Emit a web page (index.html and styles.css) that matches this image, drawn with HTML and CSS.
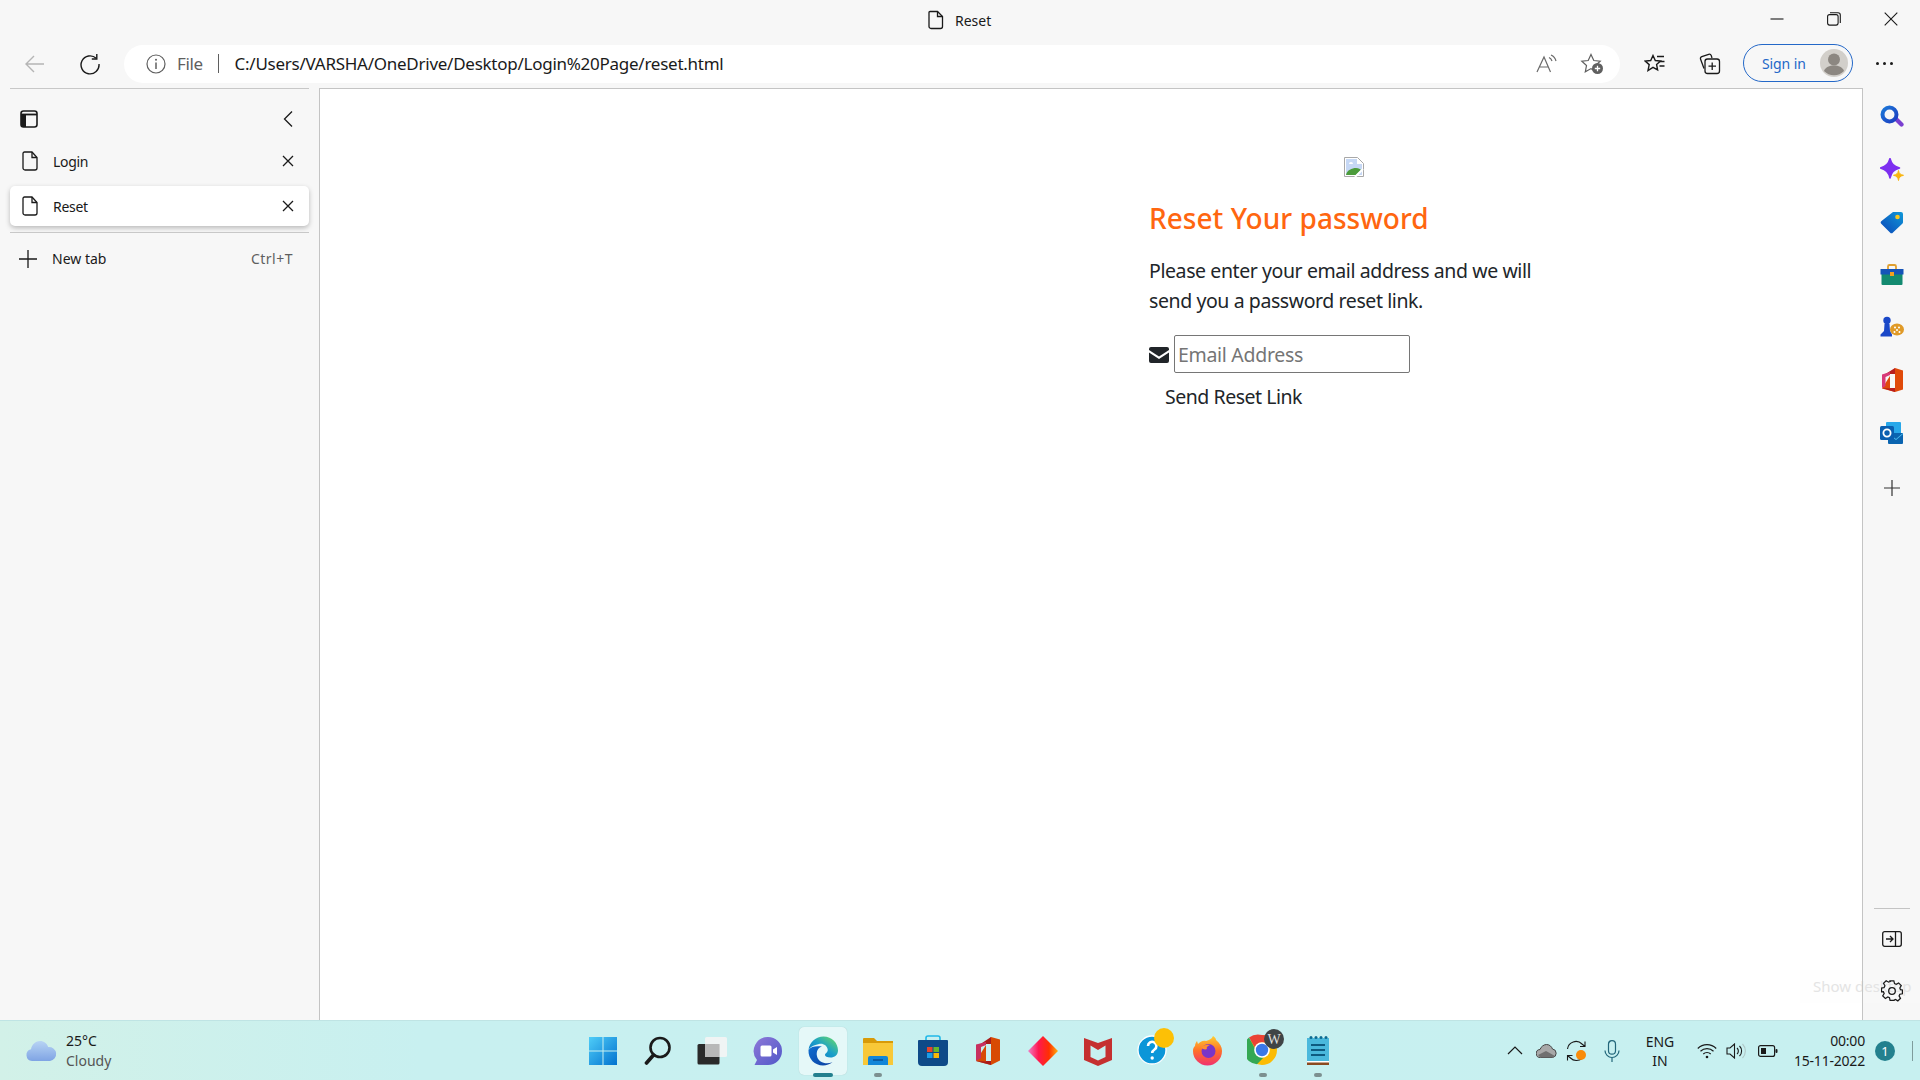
FILE: index.html
```html
<!DOCTYPE html>
<html>
<head>
    <title>Reset</title>
    <link rel="stylesheet" href="styles.css">
</head>
<body>
    <!-- title bar -->
    <div class="titlebar">
        <div class="title">
            <svg width="18" height="20" viewBox="0 0 18 20" fill="none" stroke="#1a1a1a" stroke-width="1.3"><path d="M3 1.5h7.5L15.5 6.500V16.500a2 2 0 0 1-2 2H4a2 2 0 0 1-2-2V2.500a1 1 0 0 1 1-1z"/><path d="M10.500 1.500V6.500h5"/></svg>
            <span>Reset</span>
        </div>
        <div class="winbtns">
            <svg width="14" height="14" viewBox="0 0 14 14" stroke="#1a1a1a" stroke-width="1.100"><path d="M0.500 7h13"/></svg>
            <svg width="14" height="14" viewBox="0 0 14 14" fill="none" stroke="#1a1a1a" stroke-width="1.100"><rect x="0.600" y="2.600" width="10.500" height="10.500" rx="2"/><path d="M3 0.700h8a2.300 2.300 0 0 1 2.300 2.300v8"/></svg>
            <svg width="14" height="14" viewBox="0 0 14 14" stroke="#1a1a1a" stroke-width="1.100"><path d="M0.700 0.700l12.600 12.600M13.300 0.700L0.700 13.300"/></svg>
        </div>
    </div>

    <!-- toolbar -->
    <div class="toolbar">
        <svg class="back" width="22" height="20" viewBox="0 0 22 20" fill="none" stroke="#b5b5b5" stroke-width="1.400"><path d="M20 10H2M10 2l-8 8 8 8"/></svg>
        <svg class="reload" width="22" height="22" viewBox="0 0 22 22" fill="none" stroke="#1a1a1a" stroke-width="1.400"><path d="M17.200 5.300A9 9 0 1 0 20 11"/><path d="M17.800 1v5h-5"/></svg>
        <div class="addressbar">
            <svg width="20" height="20" viewBox="0 0 20 20" fill="none" stroke="#5f5f5f" stroke-width="1.200"><circle cx="10" cy="10" r="9"/><path d="M10 8.500v6.500" stroke-width="1.500"/><circle cx="10" cy="5.800" r="1" fill="#5f5f5f" stroke="none"/></svg>
            <span class="scheme">File</span>
            <span class="sep"></span>
            <span class="url">C:/Users/VARSHA/OneDrive/Desktop/Login%20Page/reset.html</span>
            <svg class="readaloud" width="22" height="20" viewBox="0 0 22 20" fill="none" stroke="#6a6a6a" stroke-width="1.200"><path d="M1 18L8 3l6.500 15M3.500 13h9"/><path d="M13 3.500a6 6 0 0 1 3 3.500M15 1a9 9 0 0 1 5 6"/></svg>
            <svg class="addfav" width="24" height="22" viewBox="0 0 24 22"><path d="M11 1.500l2.800 6 6.400 0.700-4.700 4.300 1.300 6.300-5.800-3.200-5.700 3.200 1.200-6.300L1.800 8.200l6.400-0.700z" fill="none" stroke="#5f5f5f" stroke-width="1.200"/><circle cx="17.500" cy="15.500" r="5.500" fill="#5f5f5f"/><path d="M14.800 15.500h5.400M17.500 12.800v5.400" stroke="#fff" stroke-width="1.300"/></svg>
        </div>
        <svg class="favs" width="22" height="20" viewBox="0 0 22 20" fill="none" stroke="#1a1a1a" stroke-width="1.400"><path d="M9 1.500l2.300 5 5.200 0.600-3.900 3.500 1 5.300L9 13.300l-5 3.200 1.200-5.900L1.200 7.100l5.500-0.600z"/><path d="M13 2.500h7M15.500 7.500h5M15.500 12h5"/></svg>
        <svg class="colls" width="22" height="22" viewBox="0 0 22 22" fill="none" stroke="#1a1a1a" stroke-width="1.300"><path d="M5 15.500L1.600 6.200a2 2 0 0 1 1.200-2.600L9.700 1.300a2 2 0 0 1 2.500 1.100L13 5"/><rect x="6" y="6" width="14.500" height="14.500" rx="2.500"/><path d="M13.200 9.500v7.500M9.500 13.200h7.500"/></svg>
        <div class="signin">
            <span>Sign in</span>
            <svg width="28" height="28" viewBox="0 0 28 28"><circle cx="14" cy="14" r="14" fill="#d2cfca"/><circle cx="14" cy="10.500" r="6" fill="#8c8781"/><path d="M4 22c1.500-4 5.500-5.500 10-5.500S22.500 18 24 22a14 14 0 0 1-20 0z" fill="#8c8781"/></svg>
        </div>
        <div class="more"><i></i><i></i><i></i></div>
    </div>

    <div class="main">
        <!-- vertical tabs -->
        <div class="sidebar">
            <div class="side-head">
                <svg width="18" height="18" viewBox="0 0 18 18"><rect x="1" y="1" width="16" height="16" rx="2.500" fill="none" stroke="#1a1a1a" stroke-width="1.600"/><path d="M1 4.500h16" stroke="#1a1a1a" stroke-width="1.800"/><path d="M1 4h5v13H3a2 2 0 0 1-2-2z" fill="#1a1a1a"/></svg>
                <svg width="10" height="18" viewBox="0 0 10 18" fill="none" stroke="#1a1a1a" stroke-width="1.300"><path d="M9 1.500L1.500 9 9 16.500"/></svg>
            </div>
            <div class="tab">
                <svg width="16" height="20" viewBox="0 0 16 20" fill="none" stroke="#1a1a1a" stroke-width="1.300"><path d="M2.500 1h7.500l5 5.500V17a2 2 0 0 1-2 2H3a2 2 0 0 1-2-2V2.500A1.500 1.500 0 0 1 2.500 1z"/><path d="M10 1v5.500h5"/></svg>
                <span class="tab-name">Login</span>
                <svg width="12" height="12" viewBox="0 0 12 12" stroke="#1a1a1a" stroke-width="1.300"><path d="M1 1l10 10M11 1L1 11"/></svg>
            </div>
            <div class="tab tab-active">
                <svg width="16" height="20" viewBox="0 0 16 20" fill="none" stroke="#1a1a1a" stroke-width="1.300"><path d="M2.500 1h7.500l5 5.500V17a2 2 0 0 1-2 2H3a2 2 0 0 1-2-2V2.500A1.500 1.500 0 0 1 2.500 1z"/><path d="M10 1v5.500h5"/></svg>
                <span class="tab-name">Reset</span>
                <svg width="12" height="12" viewBox="0 0 12 12" stroke="#1a1a1a" stroke-width="1.300"><path d="M1 1l10 10M11 1L1 11"/></svg>
            </div>
            <div class="newtab">
                <svg width="18" height="18" viewBox="0 0 18 18" stroke="#1a1a1a" stroke-width="1.300"><path d="M9 0v18M0 9h18"/></svg>
                <span class="tab-name">New tab</span>
                <span class="shortcut">Ctrl+T</span>
            </div>
        </div>

        <!-- page -->
        <div class="page">
            <div class="reset-box">
                <svg class="broken" width="20" height="20" viewBox="0 0 20 20"><path d="M0.500 0.500h13l6 6v13h-19z" fill="#fff" stroke="#a8a8a8"/><path d="M2 2h11v5h5v11H2z" fill="#c6d8f5"/><path d="M2 18c1-5 6-7 10-7 3 0 4 1 5 2l-5 5z" fill="#4c9c3c"/><path d="M5 7a2 2 0 0 1 4 0z" fill="#fff"/><path d="M11 20l8-8" stroke="#fff" stroke-width="2"/></svg>
                <h3>Reset Your password</h3>
                <p>Please enter your email address and we will send you a password reset link.</p>
                <form class="reset-form" onsubmit="return false;">
                    <div class="field">
                        <svg width="20" height="16" viewBox="0 0 20 16"><path d="M2 0h16a2 2 0 0 1 2 2v1l-10 6.500L0 3V2a2 2 0 0 1 2-2z" fill="#212529"/><path d="M0 5.500l10 6.500 10-6.500V14a2 2 0 0 1-2 2H2a2 2 0 0 1-2-2z" fill="#212529"/></svg>
                        <input type="email" placeholder="Email Address">
                    </div>
                    <button type="submit">Send Reset Link</button>
                </form>
            </div>
        </div>

        <!-- edge sidebar -->
        <div class="rail">
            <svg width="24" height="24" viewBox="0 0 24 24"><defs><linearGradient id="lens" x1="0" y1="0" x2="1" y2="1"><stop offset="0" stop-color="#1c78d8"/><stop offset="1" stop-color="#1c3cc0"/></linearGradient></defs><path d="M14 15l3-3 6 6a2 2 0 0 1-3 3z" fill="#7a3fd0"/><circle cx="9.500" cy="9.500" r="7" fill="none" stroke="url(#lens)" stroke-width="4"/></svg>
            <svg width="24" height="24" viewBox="0 0 24 24"><path d="M10 0.500c1.500 5.500 3.500 7.500 9.500 9.500-6 2-8 4-9.500 10C8.500 14 6 12 0.500 10 6 8 8.500 6 10 0.500z" fill="#7d2ff0" stroke="#7d2ff0" stroke-width="1.500" stroke-linejoin="round"/><path d="M18.500 12.500c0.500 3 1.500 4 5 4.800-3.500 0.800-4.500 2-5 5.200-0.600-3.200-1.600-4.400-5-5.200 3.400-0.800 4.400-1.800 5-4.800z" fill="#f9b50f" stroke="#f9b50f"/></svg>
            <svg width="24" height="24" viewBox="0 0 24 24"><defs><linearGradient id="tag" x1="0" y1="1" x2="1" y2="0"><stop offset="0" stop-color="#0a46b8"/><stop offset="1" stop-color="#1098d8"/></linearGradient></defs><path d="M13 2h8a2 2 0 0 1 2 2v8a2 2 0 0 1-1 2l-9 8.500a2 2 0 0 1-3 0L1.500 14a2 2 0 0 1 0-3z" fill="url(#tag)"/><circle cx="17.500" cy="7" r="2.300" fill="#f8c820"/></svg>
            <svg width="24" height="24" viewBox="0 0 24 24"><path d="M8 6V3.500A1.500 1.500 0 0 1 9.500 2h5A1.500 1.500 0 0 1 16 3.500V6" fill="none" stroke="#e0a030" stroke-width="1.800"/><rect x="1.500" y="10" width="21" height="12" rx="1" fill="#138a70"/><path d="M0.500 6h23v5.500H0.500z" fill="#1554b8"/><rect x="10" y="9" width="4" height="4" fill="#f0a020"/></svg>
            <svg width="24" height="24" viewBox="0 0 24 24"><ellipse cx="17" cy="14.500" rx="7" ry="6" fill="#e09a28"/><circle cx="15" cy="12.500" r="1" fill="#fff"/><circle cx="19" cy="12.500" r="1" fill="#fff"/><circle cx="17" cy="15" r="1" fill="#fff"/><circle cx="14.500" cy="17" r="1" fill="#fff"/><circle cx="19.500" cy="17" r="1" fill="#fff"/><circle cx="7" cy="5.500" r="3.700" fill="#1a48c8"/><path d="M4.500 9h5L10 16l2 3.500v2H0.500v-2L4 16z" fill="#1a48c8"/></svg>
            <svg width="22" height="24" viewBox="0 0 22 24"><path d="M14 0l8 2.500v19L14 24 1 20.500z" fill="#e04a0a"/><path d="M14 0v24L1 20l8 0.500V5L2 7.500 14 0z" fill="#b81e1e"/><path d="M1 6.500L9 4v3L4.500 9v9L1 20z" fill="#d83a78"/><path d="M9 6h5v14H9z" fill="#f7f7f7"/></svg>
            <svg width="24" height="24" viewBox="0 0 24 24"><rect x="6" y="1" width="15" height="12" rx="1" fill="#28a8ea"/><path d="M8 12h15v10a1 1 0 0 1-1 1H9a1 1 0 0 1-1-1z" fill="#0a64b0"/><path d="M8 12l8 6 7-6v1l-7 6-8-6z" fill="#50c0f0"/><rect x="0" y="5" width="14" height="14" rx="1.500" fill="#0a5fb0"/><circle cx="7" cy="12" r="3.600" fill="none" stroke="#fff" stroke-width="1.800"/></svg>
            <svg class="rail-add" width="16" height="16" viewBox="0 0 16 16" stroke="#333" stroke-width="1.200"><path d="M8 0v16M0 8h16"/></svg>
            <div class="rail-bottom">
                <div class="rail-line"></div>
                <svg width="20" height="16" viewBox="0 0 20 16" fill="none" stroke="#1a1a1a" stroke-width="1.300"><rect x="0.700" y="0.700" width="18.600" height="14.600" rx="2"/><path d="M13.500 0.700v14.600"/><path d="M4 8h6.500M8 5l3 3-3 3"/></svg>
                <svg class="gear" width="22" height="22" viewBox="0 0 22 22" fill="none" stroke="#1a1a1a" stroke-width="1.300"><path d="M9 1.500h4l0.700 2.800 1.800 0.800 2.500-1.500 2.800 2.800-1.500 2.500 0.700 1.800 2 .3v4l-2.700 0.500-0.800 1.800 1.500 2.500-2.800 2.700-2.500-1.500-1.800 0.800L13 22h-4l-0.600-2.800-1.800-0.800-2.500 1.500-2.800-2.700 1.500-2.500-0.800-1.800L0 13v-4l2.800-0.600 0.800-1.800-1.500-2.500 2.800-2.800 2.500 1.500 1.800-0.800z" transform="translate(0.500 -0.500) scale(0.95)"/><circle cx="11" cy="11" r="3.300"/></svg>
            </div>
        </div>
        <div class="tooltip">Show desktop</div>
    </div>

    <!-- windows taskbar -->
    <div class="taskbar">
        <div class="weather">
            <svg width="32" height="22" viewBox="0 0 32 22"><defs><linearGradient id="cloud" x1="0" y1="0" x2="0" y2="1"><stop offset="0" stop-color="#b8d4f4"/><stop offset="1" stop-color="#7fa4e4"/></linearGradient></defs><path d="M7 21a6 6 0 0 1-1-11.800C7 4 11 1 15 1c4 0 7 2.500 8.200 6A7 7 0 0 1 25 21z" fill="url(#cloud)"/></svg>
            <div class="weather-text"><div>25°C</div><div class="dim">Cloudy</div></div>
        </div>
        <div class="apps">
            <div class="app"><svg width="30" height="30" viewBox="0 0 30 30"><defs><linearGradient id="win" x1="0" y1="0" x2="1" y2="1"><stop offset="0" stop-color="#4fcdf8"/><stop offset="1" stop-color="#0272cf"/></linearGradient></defs><path d="M1 1h13.500v13.500H1zM15.500 1H29v13.500H15.500zM1 15.500h13.500V29H1zM15.500 15.500H29V29H15.500z" fill="url(#win)"/></svg></div>
            <div class="app"><svg width="28" height="30" viewBox="0 0 28 30" fill="none" stroke="#1a1a1a"><circle cx="16" cy="11.500" r="9.500" stroke-width="2.600"/><path d="M9.500 19L2.500 27" stroke-width="3.600" stroke-linecap="round"/></svg></div>
            <div class="app"><svg width="32" height="30" viewBox="0 0 32 30"><rect x="0.500" y="8" width="22" height="20.500" rx="1.500" fill="#2a2a2a"/><rect x="8" y="1" width="22" height="20" rx="1.500" fill="#f4f4f4" fill-opacity="0.900"/><rect x="8" y="8" width="14.500" height="13" fill="#b8b8b8"/></svg></div>
            <div class="app"><svg width="30" height="30" viewBox="0 0 30 30"><defs><linearGradient id="chat" x1="0" y1="0" x2="1" y2="1"><stop offset="0" stop-color="#8e78d8"/><stop offset="1" stop-color="#5058c8"/></linearGradient></defs><path d="M15 1a14 14 0 0 1 0 28H1.500L4 24A14 14 0 0 1 15 1z" fill="url(#chat)"/><rect x="7.500" y="9.500" width="11" height="11" rx="1.500" fill="#fff"/><path d="M20 13.500l4-2.500v8l-4-2.500z" fill="#fff"/></svg></div>
            <div class="app app-active"><span class="app-bg"><svg width="30" height="30" viewBox="0 0 30 30"><defs><linearGradient id="edgea" x1="0" y1="1" x2="1" y2="0"><stop offset="0" stop-color="#0c70c8"/><stop offset="0.500" stop-color="#1aa0c8"/><stop offset="1" stop-color="#70e060"/></linearGradient><linearGradient id="edgeb" x1="0" y1="0" x2="1" y2="1"><stop offset="0" stop-color="#0f6fd0"/><stop offset="1" stop-color="#0a3fa0"/></linearGradient></defs><path d="M0.500 14C1.500 6 8 0.500 15.500 0.500 24 0.500 30 7 30 14.500c0 4.500-3.500 7-7.500 7-3.500 0-5.500-1-5.500-2.500 0-2 3.200-2.500 2.700-5.500C19.200 9.500 15 7 11 8 6 9 2 11 0.500 14z" fill="url(#edgea)"/><path d="M0.500 14C0 23 7 29.500 15 29.500c3.500 0 7-1.200 9.500-3.200-6.500 2.500-14 0.500-15.500-6C8 15.500 10 11.500 14 10.500 9 9.800 3 10 0.500 14z" fill="url(#edgeb)"/></svg></span></div>
            <div class="app app-open"><svg width="30" height="28" viewBox="0 0 30 28"><path d="M0 2a1 1 0 0 1 1-1h10l3 3h-14z" fill="#d89a08"/><path d="M0 4h30v24H0z" fill="#f8c838"/><path d="M0 4h30v2H0z" fill="#d89a08"/><path d="M5 28v-7a2 2 0 0 1 2-2h16a2 2 0 0 1 2 2v7z" fill="#1286d8"/><path d="M10 23h10" stroke="#0a4e90" stroke-width="1.500"/></svg></div>
            <div class="app"><svg width="30" height="32" viewBox="0 0 30 32"><path d="M8 6V3a2 2 0 0 1 2-2h10a2 2 0 0 1 2 2v3" fill="none" stroke="#20b8e8" stroke-width="1.600"/><path d="M1 5h28a1 1 0 0 1 1 1v21a4 4 0 0 1-4 4H4a4 4 0 0 1-4-4V6a1 1 0 0 1 1-1z" fill="#0e4a88"/><path d="M9 12h5.500v5H9z" fill="#e8452c"/><path d="M15.500 12H21v5h-5.500z" fill="#66b82c"/><path d="M9 18h5.500v5H9z" fill="#1a9ce8"/><path d="M15.500 18H21v5h-5.500z" fill="#f8b808"/></svg></div>
            <div class="app"><svg width="24" height="28" viewBox="0 0 24 28"><path d="M15 0l9 2.500v21L15 28 0 24z" fill="#d84a04"/><path d="M15 0v28L0 24l10 .5V6L3 8 15 0z" fill="#a81c1c"/><path d="M0 7.500L10 5v3L5 10v11l-5 3z" fill="#c83060"/><path d="M10 7h5v17h-5z" fill="#c7f0f0"/></svg></div>
            <div class="app"><svg width="30" height="30" viewBox="0 0 30 30"><defs><linearGradient id="dia" x1="0" y1="0" x2="1" y2="0"><stop offset="0" stop-color="#f080c8"/><stop offset="0.350" stop-color="#ff1850"/><stop offset="0.700" stop-color="#ff3000"/><stop offset="1" stop-color="#ffb010"/></linearGradient></defs><path d="M15 0l15 15-15 15L0 15z" fill="url(#dia)"/></svg></div>
            <div class="app"><svg width="28" height="30" viewBox="0 0 28 30"><path d="M0 2l7 2.500L14 7l7-2.500L28 2v22l-14 6-14-6z" fill="#c53030"/><path d="M6.500 9.500L14 14l7.500-4.500V21L14 24.500 6.500 21z" fill="#c7f0f0"/></svg></div>
            <div class="app app-over"><svg width="40" height="40" viewBox="0 0 40 40"><circle cx="15" cy="25" r="14" fill="#0b96d8" stroke="#fff" stroke-width="1.300"/><path d="M11 21a4.200 4.200 0 1 1 6.500 3.500c-1.500 1-2.300 1.800-2.300 3.500" fill="none" stroke="#fff" stroke-width="2.600"/><circle cx="15.200" cy="33" r="1.700" fill="#fff"/><circle cx="27" cy="13" r="10" fill="#fdc006"/></svg></div>
            <div class="app"><svg width="30" height="30" viewBox="0 0 30 30"><defs><linearGradient id="ff" x1="0.500" y1="0" x2="0.500" y2="1"><stop offset="0" stop-color="#ffd030"/><stop offset="0.500" stop-color="#ff7028"/><stop offset="1" stop-color="#f03070"/></linearGradient></defs><path d="M2 10c0-2 1-4 2-5l1 3c2-2 5-4 8-3 3-1 6-2 7-5 2 1 3 3 3 4 4 3 6 7 6 11a14.500 14.500 0 0 1-29 0c0-2 0.500-4 2-5z" fill="url(#ff)"/><circle cx="15.500" cy="15" r="7" fill="#7a35c8"/><path d="M8 12c2-3 6-4 9-3-3 1-4 3-3 4-2 1-4 0-6-1z" fill="#ff9030"/></svg></div>
            <div class="app app-open app-over"><svg width="40" height="40" viewBox="0 0 40 40"><circle cx="15" cy="25" r="15" fill="#fbbc05"/><path d="M15 10a15 15 0 0 1 13 7.500H15a7.500 7.500 0 0 0-7 5L2 12.500A15 15 0 0 1 15 10z" fill="#ea4335"/><path d="M2 12.500l6.500 12a7.500 7.500 0 0 0 8 8L10 39.200A15 15 0 0 1 2 12.500z" fill="#34a853"/><circle cx="15" cy="25" r="7.800" fill="#fff"/><circle cx="15" cy="25" r="6.200" fill="#3b78e7"/><circle cx="27" cy="14" r="10" fill="#3f4446"/><text x="27" y="19" class="badge-w">W</text></svg></div>
            <div class="app app-open"><svg width="24" height="32" viewBox="0 0 24 32"><path d="M1 3h22v25H1z" fill="#4ab8dc"/><path d="M1 27h22v3H1z" fill="#8a4a20"/><path d="M1 26h22v1.500H1z" fill="#fff"/><circle cx="5" cy="2.500" r="1.500" fill="#0e6a90"/><circle cx="10" cy="2.500" r="1.500" fill="#0e6a90"/><circle cx="15" cy="2.500" r="1.500" fill="#0e6a90"/><circle cx="20" cy="2.500" r="1.500" fill="#0e6a90"/><path d="M5 10h14M5 15h14M5 20h14" stroke="#0e5a80" stroke-width="1.800"/></svg></div>
        </div>
        <div class="tray">
            <svg class="t-chev" width="16" height="9" viewBox="0 0 16 9" fill="none" stroke="#1a1a1a" stroke-width="1.200"><path d="M1 8l7-7 7 7"/></svg>
            <svg class="t-cloud" width="21" height="14" viewBox="0 0 21 14"><path d="M4.500 13.500a4 4 0 0 1-.5-8C5 2.500 8 .5 10.500.5c3 0 5 2 6 4.500a4.300 4.300 0 0 1 0 8.500z" fill="#a8a8a8" stroke="#444"/><path d="M2 11l8-4 9 5-1.500 1.500h-13z" fill="#707070"/></svg>
            <svg class="t-sync" width="22" height="22" viewBox="0 0 22 22" fill="none" stroke="#1a1a1a" stroke-width="1.100"><path d="M1.500 9A8.500 8.500 0 0 1 16 4l3 2.500M19 1.500v5h-5"/><path d="M16 18.500A8.500 8.500 0 0 1 4.500 18L1.500 15.500M1.500 20.500v-5h5"/><circle cx="15" cy="15" r="5" fill="#f98b0a" stroke="none"/></svg>
            <svg class="t-mic" width="16" height="22" viewBox="0 0 16 22" fill="none" stroke="#22667a" stroke-width="1.200"><rect x="4.500" y="0.700" width="7" height="13.500" rx="3.500"/><path d="M1 10.500a7 7 0 0 0 14 0M8 17.500V22"/></svg>
            <div class="t-lang"><div>ENG</div><div>IN</div></div>
            <svg class="t-wifi" width="20" height="16" viewBox="0 0 20 16" fill="none" stroke="#1a1a1a" stroke-width="1.200"><path d="M0.800 5.500a13 13 0 0 1 18.400 0M3.500 8.300a9.300 9.300 0 0 1 13 0M6.300 11a5.300 5.300 0 0 1 7.400 0"/><circle cx="10" cy="14" r="1.300" fill="#1a1a1a" stroke="none"/></svg>
            <svg class="t-vol" width="21" height="16" viewBox="0 0 21 16" fill="none" stroke="#1a1a1a" stroke-width="1.100"><path d="M1 5h3l4.500-4v14L4 11H1z"/><path d="M11 5a4 4 0 0 1 0 6M13.500 3a7 7 0 0 1 0 10"/><path d="M16.500 1a10 10 0 0 1 0 14" stroke="#b0c8c8"/></svg>
            <svg class="t-batt" width="20" height="12" viewBox="0 0 20 12"><rect x="0.600" y="0.600" width="16" height="10.800" rx="2" fill="none" stroke="#1a1a1a" stroke-width="1.200"/><rect x="3" y="3" width="5" height="6" fill="#1a1a1a"/><rect x="17.500" y="4" width="2" height="4" rx="1" fill="#1a1a1a"/></svg>
            <div class="t-clock"><div>00:00</div><div>15-11-2022</div></div>
            <div class="t-badge">1</div>
            <div class="t-desk"></div>
        </div>
    </div>
</body>
</html>
```

FILE: styles.css
```css
* {
    box-sizing: border-box;
}

html, body {
    margin: 0;
    padding: 0;
    height: 100%;
    overflow: hidden;
}

body {
    width: 1920px;
    height: 1080px;
    display: flex;
    flex-direction: column;
    font-family: "Noto Sans", "Open Sans", sans-serif;
    font-size: 14px;
    color: #1a1a1a;
    background-color: #f7f7f7;
}

svg {
    display: block;
    flex: none;
}

/* title bar */
.titlebar {
    height: 44px;
    display: flex;
    align-items: center;
    justify-content: flex-end;
    position: relative;
}

.title {
    position: absolute;
    left: 927px;
    top: 10px;
    display: flex;
    align-items: center;
    gap: 10px;
}

.winbtns {
    display: flex;
    gap: 43px;
    padding-right: 22px;
    margin-top: -6px;
}

/* toolbar */
.toolbar {
    height: 44px;
    display: flex;
    align-items: center;
    padding-left: 24px;
}

.reload {
    margin-left: 33px;
}

.addressbar {
    width: 1496px;
    height: 38px;
    margin-left: 23px;
    padding-left: 22px;
    margin-top: -5px;
    background-color: #fff;
    border-radius: 19px;
    display: flex;
    align-items: center;
    font-size: 17px;
}

.toolbar > svg {
    margin-top: -5px;
}

.scheme {
    margin-left: 11px;
    color: #5f5f5f;
    letter-spacing: -0.4px;
}

.sep {
    width: 1px;
    height: 19px;
    margin: 0 16px 0 15px;
    background-color: #5f5f5f;
}

.url {
    flex: 1;
    letter-spacing: -0.26px;
    white-space: nowrap;
}

.readaloud {
    margin-right: 22px;
}

.addfav {
    margin-right: 16px;
}

.favs {
    margin-left: 24px;
}

.colls {
    margin-left: 33px;
}

.signin {
    width: 110px;
    height: 38px;
    margin-left: 22px;
    margin-top: -6px;
    padding: 0 4px 0 18px;
    border: 1.500px solid #2468c8;
    border-radius: 19px;
    display: flex;
    align-items: center;
    justify-content: space-between;
    color: #2468c8;
    font-size: 14px;
    letter-spacing: -0.1px;
}

.more {
    display: flex;
    gap: 4px;
    margin-left: 23px;
    margin-top: -6px;
}

.more i {
    width: 3px;
    height: 3px;
    border-radius: 50%;
    background-color: #1a1a1a;
}

/* main area */
.main {
    flex: 1;
    display: flex;
    min-height: 0;
    position: relative;
}

.sidebar {
    width: 320px;
    padding: 0 10px;
    border-right: 1px solid #c4c4c4;
    display: flex;
    flex-direction: column;
}

.side-head {
    height: 54px;
    padding: 6px 16px 0 10px;
    border-top: 1px solid #c8c8c8;
    display: flex;
    align-items: center;
    justify-content: space-between;
}

.tab {
    height: 40px;
    margin-bottom: 5px;
    padding: 0 15px 0 12px;
    display: flex;
    align-items: center;
    gap: 15px;
    margin-top: -1px;
}

.tab-name {
    flex: 1;
    letter-spacing: -0.3px;
}

.tab-active {
    margin-top: 0;
    margin-bottom: 0;
    background-color: #fff;
    border-radius: 5px;
    box-shadow: 0 2px 5px rgba(0, 0, 0, 0.25);
}

.newtab {
    height: 52px;
    margin-top: 6px;
    padding: 0 16px 0 9px;
    border-top: 1px solid #c8c8c8;
    display: flex;
    align-items: center;
    gap: 15px;
}

.newtab .tab-name {
    letter-spacing: 0;
}

.shortcut {
    color: #5f5f5f;
    letter-spacing: 0.5px;
}

/* page content */
.page {
    flex: 1;
    border-top: 1px solid #c4c4c4;
    background-color: #fff;
    padding: 68px 0 0 829px;
    font-size: 19.5px;
    color: #212529;
}

.reset-box {
    width: 410px;
}

.broken {
    margin: 0 auto;
}

h3 {
    margin: 20px 0 17px;
    font-size: 28px;
    font-weight: 500;
    line-height: 42px;
    color: #ff6610;
    letter-spacing: 0.03px;
}

.page p {
    margin: 0 0 19px;
    line-height: 30px;
    letter-spacing: -0.41px;
}

.field {
    display: flex;
    align-items: center;
    gap: 5px;
}

.field svg {
    margin-top: 2px;
}

.field input {
    width: 236px;
    height: 38px;
    padding: 0 3px;
    border: 1px solid #767676;
    border-radius: 2px;
    font-family: inherit;
    font-size: 19.5px;
    letter-spacing: -0.3px;
}

.field input::placeholder {
    color: #757575;
}

.reset-form button {
    margin-top: 5px;
    padding: 4px 16px;
    border: none;
    background: none;
    font-family: inherit;
    font-size: 19.5px;
    line-height: 30px;
    color: #212529;
    letter-spacing: -0.47px;
}

/* edge sidebar */
.rail {
    width: 58px;
    padding-top: 17px;
    border-left: 1px solid #c4c4c4;
    display: flex;
    flex-direction: column;
    align-items: center;
    gap: 28.6px;
    position: relative;
    z-index: 1;
}

.rail-add {
    margin-top: 7px;
}

.rail-bottom {
    margin-top: auto;
    padding-bottom: 18px;
    display: flex;
    flex-direction: column;
    align-items: center;
    gap: 22px;
}

.rail-line {
    width: 36px;
    height: 1px;
    background-color: #c4c4c4;
}

.gear {
    margin-top: 11px;
}

.tooltip {
    position: absolute;
    right: 0;
    bottom: 17px;
    width: 120px;
    height: 33px;
    padding-left: 13px;
    line-height: 33px;
    font-size: 15px;
    white-space: nowrap;
    color: #e4e4e4;
    background-color: rgba(250, 250, 250, 0.25);
}

/* taskbar */
.taskbar {
    height: 60px;
    display: grid;
    grid-template-columns: 575px auto 1fr;
    align-items: center;
    background: linear-gradient(90deg, #d2f1e8 0, #c8f0f0 420px, #c7f0f0 100%);
    border-top: 1px solid #bfe4e4;
}

.weather {
    display: flex;
    align-items: center;
    gap: 9px;
    padding-left: 25px;
    font-size: 14px;
    line-height: 20px;
}

.weather-text .dim {
    color: #555;
}

.apps {
    display: flex;
}

.app {
    width: 55px;
    height: 59px;
    display: flex;
    align-items: center;
    justify-content: center;
    position: relative;
}

.app-bg {
    width: 48px;
    height: 48px;
    display: flex;
    align-items: center;
    justify-content: center;
    border-radius: 5px;
    background-color: #e5f8f8;
    box-shadow: 0 0 1px rgba(0, 0, 0, 0.2);
}

.app-open::after,
.app-active::after {
    content: "";
    position: absolute;
    left: 50%;
    bottom: 3px;
    width: 8px;
    height: 4px;
    margin-left: -4px;
    border-radius: 2px;
    background-color: #7c9090;
}

.app-active::after {
    width: 20px;
    margin-left: -10px;
    background-color: #23808e;
}

.app-over svg {
    margin: -11px 0 0 9px;
}

.badge-w {
    font-family: "Liberation Serif", serif;
    font-size: 14px;
    fill: #ddd;
    text-anchor: middle;
}

.tray {
    display: flex;
    align-items: center;
    height: 100%;
    padding-left: 162px;
    font-size: 14px;
}

.t-cloud {
    margin-left: 13px;
}

.t-sync {
    margin-left: 9px;
}

.t-mic {
    margin-left: 16px;
}

.t-lang {
    width: 40px;
    margin-left: 20px;
    text-align: center;
    line-height: 19px;
}

.t-wifi {
    margin-left: 17px;
}

.t-vol {
    margin-left: 9px;
}

.t-batt {
    margin-left: 11px;
}

.t-clock {
    width: 78px;
    margin-left: 9px;
    text-align: right;
    line-height: 20px;
    letter-spacing: -0.2px;
}

.t-badge {
    width: 20px;
    height: 20px;
    margin-left: 10px;
    border-radius: 50%;
    background-color: #23808e;
    color: #fff;
    font-size: 13px;
    line-height: 20px;
    text-align: center;
}

.t-desk {
    width: 1px;
    height: 20px;
    margin-left: 17px;
    background-color: #7f9c9c;
}
```
